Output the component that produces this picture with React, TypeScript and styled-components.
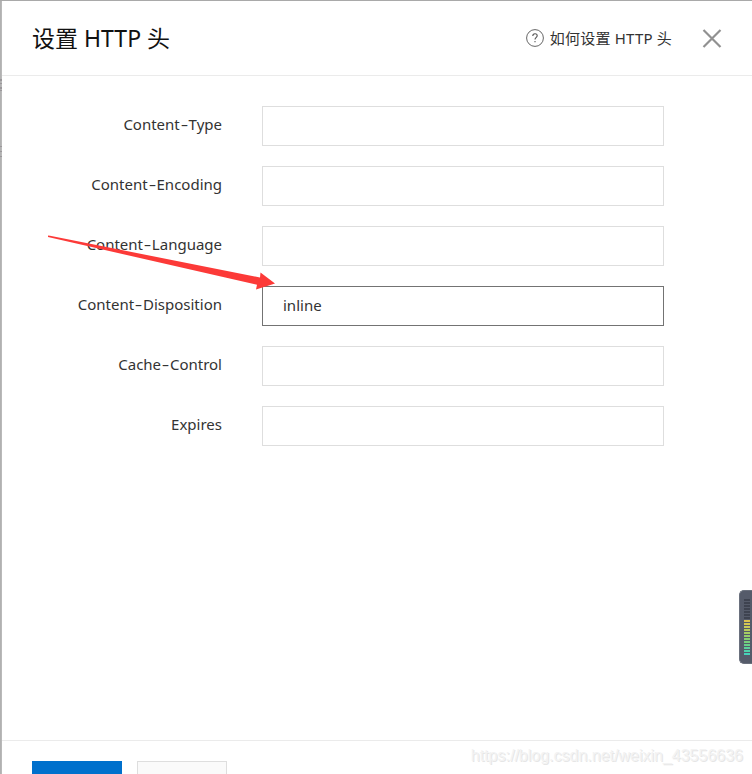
import React, { Fragment } from "react";
import styled, { createGlobalStyle } from "styled-components";

const GlobalStyle = createGlobalStyle`
  * { box-sizing: border-box; }
  body { margin: 0; background: #fff; overflow: hidden; }
`;

const Drawer = styled.div`
  position: relative;
  display: flex;
  flex-direction: column;
  width: 752px;
  height: 774px;
  overflow: hidden;
  padding-left: 2px;
  border-top: 1px solid #a9a9a9;
  background: linear-gradient(90deg, #b1b1b1 1px, #b9b9b9 1px, #b9b9b9 2px, #fff 2px);
  color: #333;
  font-family: "Noto Sans", "Noto Sans CJK SC", sans-serif;
  font-size: 15px;
`;

const Header = styled.header`
  display: flex;
  align-items: center;
  flex: none;
  height: 75px;
  padding: 0 30px;
  border-bottom: 1px solid #ebebeb;
`;

const Title = styled.h1`
  margin: 0 0 1px;
  flex: 1;
  color: #111;
  font-size: 23px;
  font-weight: 400;
  letter-spacing: 0.02px;
  line-height: 32px;
  white-space: nowrap;
`;

const HelpLink = styled.a`
  display: flex;
  align-items: center;
  gap: 6px;
  margin-right: 30px;
  white-space: nowrap;
`;

const HelpText = styled.span`
  letter-spacing: 0.2px;
  line-height: 20px;
`;

const CloseButton = styled.button`
  display: flex;
  padding: 0;
  border: 0;
  background: none;
`;

const Form = styled.form`
  flex: 1;
  display: flex;
  flex-direction: column;
  gap: 20px;
  padding-top: 30px;
`;

const Row = styled.div`
  display: grid;
  grid-template-columns: 220px 402px;
  column-gap: 40px;
  height: 40px;
`;

const Label = styled.label`
  line-height: 36px;
  text-align: right;
  white-space: nowrap;
`;

const Hyphen = styled.span`
  display: inline-block;
  margin: 0 2px;
  transform: scaleX(1.55);
`;

const Input = styled.input<{ $active: boolean }>`
  width: 402px;
  height: 40px;
  padding: 0 20px 2px;
  border: 1px solid ${(p) => (p.$active ? "#737373" : "#dedede")};
  border-radius: 0;
  outline: 0;
  background: #fff;
  color: #333;
  font: inherit;
`;

const Footer = styled.footer`
  display: flex;
  flex: none;
  gap: 15px;
  height: 34px;
  padding: 20px 30px 0;
  border-top: 1px solid #ebebeb;
`;

const Button = styled.button<{ $primary?: boolean }>`
  flex: none;
  width: 90px;
  height: 36px;
  border: 1px solid ${(p) => (p.$primary ? "#0070cc" : "#dedede")};
  background: ${(p) => (p.$primary ? "#0070cc" : "#fafafa")};
`;

const Arrow = styled.svg`
  position: absolute;
  left: 46px;
  top: 233px;
`;

const EdgeMark = styled.i<{ $top: number; $height: number }>`
  position: absolute;
  left: 0;
  top: ${(p) => p.$top}px;
  width: 2px;
  height: ${(p) => p.$height}px;
  background: #9b989b;
`;

const Meter = styled.div`
  position: absolute;
  right: 0;
  top: 589px;
  display: flex;
  flex-direction: column;
  gap: 1px;
  width: 13px;
  height: 74px;
  padding: 8px 2px 0 4px;
  border: 1px solid #6a707d;
  border-right: 0;
  border-radius: 5px 0 0 5px;
  background: #555b6a;
`;

const Bar = styled.i<{ $color: string }>`
  height: 2px;
  background: ${(p) => p.$color};
`;

const Watermark = styled.div`
  position: absolute;
  right: 9px;
  bottom: 8px;
  color: #f3f3f3;
  text-shadow: 1px 1px 0 #e6e6e6;
  font: 16px/20px "Liberation Sans", sans-serif;
  white-space: nowrap;
`;

const fields = [
  ["Content-Type", ""],
  ["Content-Encoding", ""],
  ["Content-Language", ""],
  ["Content-Disposition", "inline"],
  ["Cache-Control", ""],
  ["Expires", ""],
];

const edgeMarks = [
  [78, 2], [82, 1], [86, 2], [89, 1], [145, 1], [150, 1], [155, 1],
];

const bars = [
  "#3e4350", "#3e4350", "#3e4350", "#3e4350", "#3e4350", "#3e4350",
  "#3e4350", "#dcc24f", "#d5c752", "#c9cb57", "#b8cc5c", "#a5ce63", "#96cf6a",
  "#85cf72", "#76d07c", "#68d08a", "#5bd19a", "#50d2aa", "#46d3ba",
];

export default function App() {
  return (
    <>
      <GlobalStyle />
      <Drawer>
        {edgeMarks.map(([top, height]) => (
          <EdgeMark key={top} $top={top} $height={height} />
        ))}
        <Header>
          <Title>设置 HTTP 头</Title>
          <HelpLink>
            <svg width="18" height="18" viewBox="0 0 18 18" fill="none" stroke="#555">
              <circle cx="9" cy="9" r="8.4" strokeWidth="0.9" />
              <path d="M6.8 7.1C6.8 5.5 7.7 4.8 9 4.8s2.2.8 2.2 2c0 1.5-2.2 1.8-2.2 3.8M9 11.9v1.3" strokeWidth="1.1" />
            </svg>
            <HelpText>如何设置 HTTP 头</HelpText>
          </HelpLink>
          <CloseButton aria-label="关闭">
            <svg width="20" height="20" viewBox="0 0 20 20" stroke="#919191" strokeWidth="2.2">
              <path d="M1.5 2l17 17M18.500 2l-17 17" />
            </svg>
          </CloseButton>
        </Header>
        <Form>
          {fields.map(([name, value]) => (
            <Row key={name}>
              <Label htmlFor={name}>
                {name.split("-").map((word, i) => (
                  <Fragment key={word}>
                    {i > 0 && <Hyphen>-</Hyphen>}
                    {word}
                  </Fragment>
                ))}
              </Label>
              <Input id={name} defaultValue={value} $active={value !== ""} />
            </Row>
          ))}
        </Form>
        <Footer>
          <Button $primary />
          <Button />
        </Footer>
        <Arrow width="232" height="60" viewBox="0 0 232 60">
          <path d="M2 1.500L4 1.800L214 43.500L214.500 38.500L229 49.500L210 55.500L211 50.800L2 3Z" fill="#fc3a38" />
        </Arrow>
        <Meter>
          {bars.map((color, i) => (
            <Bar key={i} $color={color} />
          ))}
        </Meter>
        <Watermark>https://blog.csdn.net/weixin_43556636</Watermark>
      </Drawer>
    </>
  );
}
